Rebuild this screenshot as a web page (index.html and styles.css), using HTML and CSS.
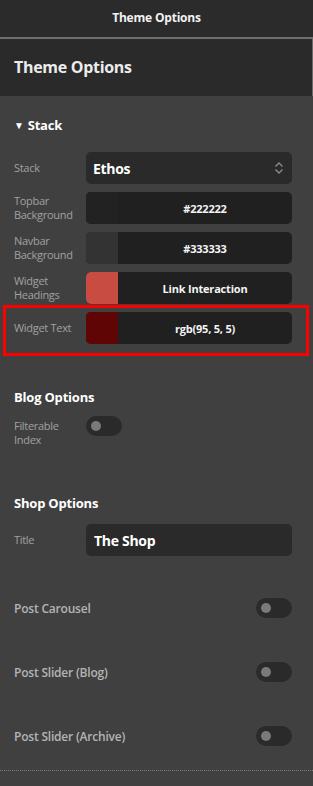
FILE: index.html
```html
<!DOCTYPE html>
<html>
<head>
<meta charset="utf-8">
<link rel="stylesheet" href="styles.css">
</head>
<body>
<div class="topbar">Theme Options</div>
<div class="header"><h1>Theme Options</h1></div>
<div class="panel">
  <div class="group-title"><span class="caret">&#9660;</span>Stack</div>
  <div class="rows">
    <div class="row">
      <div class="label">Stack</div>
      <div class="control select">
        <span>Ethos</span>
        <svg class="updown" width="10" height="14" viewBox="0 0 10 14"><path d="M1.5 5.5 L5 2 L8.5 5.5 M1.5 8.5 L5 12 L8.5 8.5" fill="none" stroke="#8a8a8a" stroke-width="1.4"/></svg>
      </div>
    </div>
    <div class="row">
      <div class="label">Topbar Background</div>
      <div class="control color"><span class="swatch sw1"></span><span class="value">#222222</span></div>
    </div>
    <div class="row">
      <div class="label">Navbar Background</div>
      <div class="control color"><span class="swatch sw2"></span><span class="value">#333333</span></div>
    </div>
    <div class="row">
      <div class="label">Widget Headings</div>
      <div class="control color"><span class="swatch sw3"></span><span class="value">Link Interaction</span></div>
    </div>
    <div class="row highlighted">
      <div class="label">Widget Text</div>
      <div class="control color"><span class="swatch sw4"></span><span class="value">rgb(95, 5, 5)</span></div>
    </div>
  </div>

  <div class="section-title blog">Blog Options</div>
  <div class="row toprow">
    <div class="label">Filterable Index</div>
    <div class="toggle"><span class="knob"></span></div>
  </div>

  <div class="section-title shop">Shop Options</div>
  <div class="row">
    <div class="label">Title</div>
    <div class="control text">The Shop</div>
  </div>

  <div class="switch-row first"><span>Post Carousel</span><div class="toggle"><span class="knob"></span></div></div>
  <div class="switch-row"><span>Post Slider (Blog)</span><div class="toggle"><span class="knob"></span></div></div>
  <div class="switch-row"><span>Post Slider (Archive)</span><div class="toggle"><span class="knob"></span></div></div>
  <div class="divider"></div>
</div>
</body>
</html>
```
FILE: styles.css
```css
* { box-sizing: border-box; }
html, body { margin: 0; padding: 0; }
body {
  background: #404040;
  font-family: "Open Sans", "Noto Sans", sans-serif;
  color: #fff;
  width: 313px;
  height: 786px;
  overflow: hidden;
}
.topbar {
  height: 39px;
  background: #2b2b2b;
  border-bottom: 2px solid #6e6e6e;
  text-align: center;
  font-size: 12px;
  font-weight: 700;
  line-height: 36px;
  color: #f2f2f2;
  letter-spacing: -0.2px;
}
.header {
  height: 57px;
  background: #2a2a2a;
  border-right: 1px solid #6a6a6a;
  padding: 0 14px;
}
.header h1 {
  margin: 0;
  font-size: 16px;
  font-weight: 700;
  line-height: 56px;
  color: #ececec;
  letter-spacing: -0.3px;
}
.panel { padding: 0 21px 0 14px; }
.group-title {
  margin-top: 20px;
  height: 18px;
  line-height: 18px;
  font-size: 13px;
  font-weight: 700;
  display: flex;
  align-items: center;
  letter-spacing: -0.2px;
}
.caret { font-size: 10px; margin-right: 4px; }
.rows {
  margin-top: 18px;
  display: flex;
  flex-direction: column;
  gap: 8px;
}
.row {
  display: flex;
  align-items: center;
  min-height: 32px;
  position: relative;
}
.label {
  width: 72px;
  flex: none;
  font-size: 11px;
  line-height: 14px;
  color: #a0a0a0;
  padding-right: 10px;
  letter-spacing: -0.3px;
}
.control {
  flex: 1;
  height: 32px;
  border-radius: 5px;
  display: flex;
  align-items: center;
  overflow: hidden;
}
.select {
  background: #2a2a2a;
  padding: 0 8px 0 7px;
  justify-content: space-between;
  font-size: 14px;
  font-weight: 700;
  letter-spacing: -0.3px;
}
.color { background: #202020; }
.swatch { width: 32px; height: 32px; flex: none; }
.sw1 { background: #222222; }
.sw2 { background: #333333; }
.sw3 { background: #c84c41; }
.sw4 { background: #5f0505; }
.value {
  flex: 1;
  text-align: center;
  font-size: 11px;
  font-weight: 700;
  color: #f4f4f4;
  letter-spacing: -0.2px;
}
.highlighted::after {
  content: "";
  position: absolute;
  left: -11px;
  right: -17px;
  top: -7px;
  bottom: -12px;
  border: 3px solid #ff0000;
  pointer-events: none;
}
.section-title {
  font-size: 13px;
  font-weight: 700;
  line-height: 18px;
  letter-spacing: -0.2px;
}
.blog { margin-top: 44px; }
.toprow { align-items: flex-start; margin-top: 10px; min-height: 0; }
.toprow .label { padding-top: 3px; }
.toggle {
  width: 36px;
  height: 20px;
  border-radius: 10px;
  background: #2a2a2a;
  position: relative;
  flex: none;
}
.knob {
  position: absolute;
  left: 5px;
  top: 5px;
  width: 10px;
  height: 10px;
  border-radius: 50%;
  background: #7a7a7a;
}
.shop { margin-top: 47px; }
.section-title.shop + .row { margin-top: 12px; }
.text {
  background: #2a2a2a;
  padding: 0 8px;
  font-size: 14px;
  font-weight: 700;
  letter-spacing: -0.3px;
}
.switch-row {
  display: flex;
  justify-content: space-between;
  align-items: center;
  height: 20px;
  margin-top: 44px;
  font-size: 12px;
  font-weight: 600;
  color: #b4b4b4;
  letter-spacing: -0.2px;
}
.switch-row.first { margin-top: 42px; }
.divider {
  margin: 24px -21px 0 -14px;
  border-top: 1px dotted #7a7a7a;
}
```
